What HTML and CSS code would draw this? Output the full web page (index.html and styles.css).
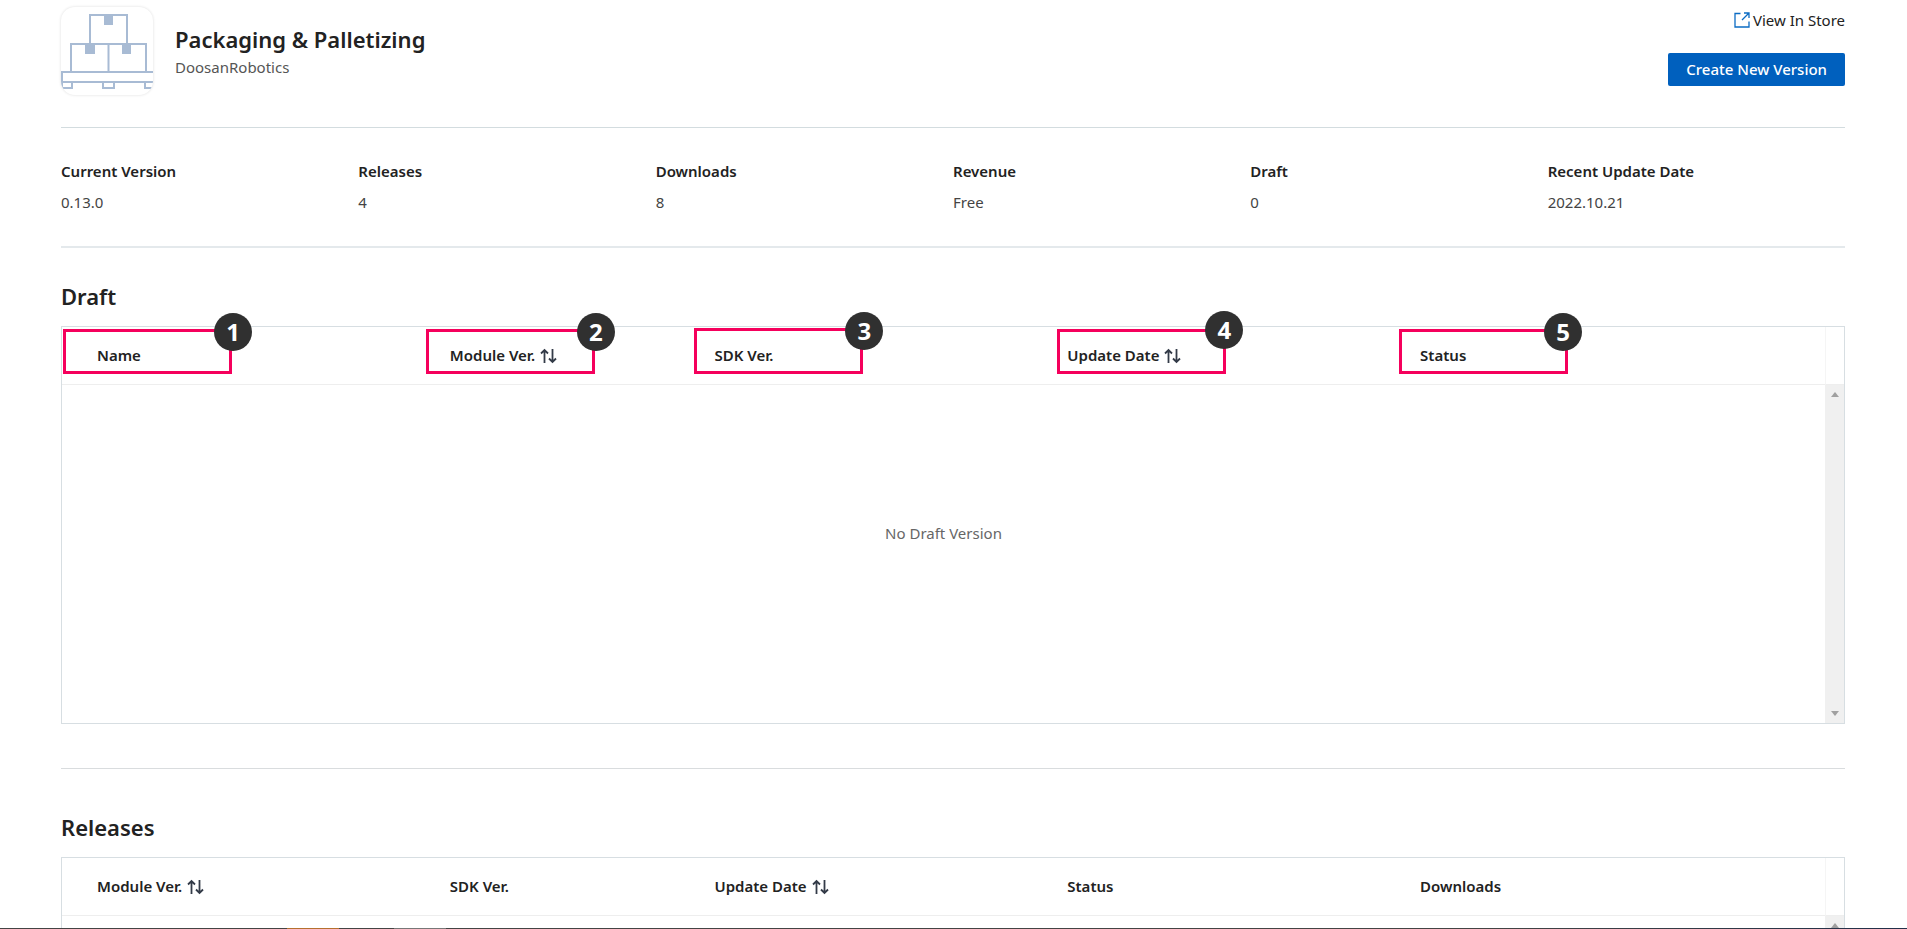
FILE: index.html
```html
<!DOCTYPE html>
<html lang="en">
<head>
<meta charset="utf-8">
<title>Packaging &amp; Palletizing</title>
<link rel="stylesheet" href="styles.css">
</head>
<body>
<svg class="defs" aria-hidden="true">
  <symbol id="sort" viewBox="0 0 17 16">
    <path d="M4.500 15V2.500M1 5.500l3.500-3.500L8 5.500M12.500 1v12.500M9 10.500l3.500 3.500 3.500-3.500" fill="none" stroke="currentColor" stroke-width="1.800"/>
  </symbol>
</svg>
<main class="page">
  <header class="app-header">
    <svg class="app-logo" viewBox="0 0 92 88" aria-hidden="true">
      <g fill="none" stroke="#a8bbd4" stroke-width="2">
        <path d="M29 36V8h37v28M10 65V37h75v28M47.500 37v28M0 65h92M1 65v10h91M1 75v6h10v-6M42 75v6h11v-6M84 75v6h8"/>
      </g>
      <path d="M43 8h9v10h-9zM24 37h10v10H24zM61 37h9v10h-9z" fill="#a8bbd4"/>
    </svg>
    <div class="app-title">
      <h1>Packaging &amp; Palletizing</h1>
      <p>DoosanRobotics</p>
    </div>
    <div class="app-actions">
      <a class="store-link" href="#">
        <svg viewBox="0 0 16 16" aria-hidden="true"><path d="M6.500 1.500h-5.500v13.500h14v-5.500M10 1h5v5M15 1L8 8" fill="none" stroke="#0b6cc4" stroke-width="1.300"/></svg>View In Store</a>
      <button class="create" type="button">Create New Version</button>
    </div>
  </header>

  <dl class="stats">
    <div><dt>Current Version</dt><dd>0.13.0</dd></div>
    <div><dt>Releases</dt><dd>4</dd></div>
    <div><dt>Downloads</dt><dd>8</dd></div>
    <div><dt>Revenue</dt><dd>Free</dd></div>
    <div><dt>Draft</dt><dd>0</dd></div>
    <div><dt>Recent Update Date</dt><dd>2022.10.21</dd></div>
  </dl>

  <section class="block draft">
    <h2>Draft</h2>
    <table class="grid">
      <colgroup><col class="wide"><col class="narrow"><col class="wide"><col class="wide"><col><col class="gutter"></colgroup>
      <thead>
        <tr>
          <th>Name<span class="mark m1"><b>1</b></span></th>
          <th>Module Ver. <svg class="sort"><use href="#sort"/></svg><span class="mark m2"><b>2</b></span></th>
          <th>SDK Ver.<span class="mark m3"><b>3</b></span></th>
          <th>Update Date <svg class="sort"><use href="#sort"/></svg><span class="mark m4"><b>4</b></span></th>
          <th>Status<span class="mark m5"><b>5</b></span></th>
          <td class="corner"></td>
        </tr>
      </thead>
      <tbody>
        <tr>
          <td class="empty" colspan="5">No Draft Version</td>
          <td class="track"><div class="arrows"><i class="up"></i><i class="down"></i></div></td>
        </tr>
      </tbody>
    </table>
  </section>

  <section class="block releases">
    <h2>Releases</h2>
    <table class="grid">
      <colgroup><col class="wide"><col class="narrow"><col class="wide"><col class="wide"><col><col class="gutter"></colgroup>
      <thead>
        <tr>
          <th>Module Ver. <svg class="sort"><use href="#sort"/></svg></th>
          <th>SDK Ver.</th>
          <th>Update Date <svg class="sort"><use href="#sort"/></svg></th>
          <th>Status</th>
          <th>Downloads</th>
          <td class="corner"></td>
        </tr>
      </thead>
      <tbody>
        <tr>
          <td class="empty" colspan="5"></td>
          <td class="track"><div class="arrows"><i class="up"></i><i class="down"></i></div></td>
        </tr>
      </tbody>
    </table>
  </section>
</main>
<div class="taskbar"></div>
</body>
</html>
```
FILE: styles.css
```css
* { box-sizing: border-box; }
body {
  margin: 0;
  height: 100vh;
  overflow: hidden;
  background: #fff;
  color: #222;
  font: 15px/20px "Noto Sans", sans-serif;
}
h1, h2, p, dl, dd { margin: 0; }
h1, h2 { font-size: 22px; line-height: 30px; font-weight: 600; }
.defs { position: absolute; width: 0; height: 0; }
.page { padding: 0 62px 0 61px; }

.app-header {
  display: flex;
  align-items: flex-start;
  padding: 7px 0 32px;
  border-bottom: 1px solid #d3dcdf;
}
.app-logo {
  width: 92px;
  height: 88px;
  border-radius: 14px;
  box-shadow: 0 0 3px rgba(0, 0, 0, .14);
}
.app-title { flex: 1; padding: 17px 0 0 22px; }
.app-title p { margin-top: 3px; color: #555; }
.app-actions { display: flex; flex-direction: column; align-items: flex-end; gap: 23px; padding-top: 3px; }
.store-link { display: flex; align-items: center; gap: 3px; color: #222; text-decoration: none; }
.store-link svg { width: 16px; height: 16px; }
.create {
  height: 33px;
  padding: 0 18px 1px;
  border: 0;
  border-radius: 2px;
  background: #0060be;
  color: #fff;
  font: 500 15px/20px "Noto Sans", sans-serif;
}

.stats {
  display: grid;
  grid-template-columns: repeat(6, 1fr);
  padding: 33px 0 34px;
  border-bottom: 2px solid #e4e9ec;
}
.stats dt { font-weight: 600; }
.stats dd { margin-top: 11px; color: #444; }

.block h2 { margin-bottom: 15px; }
.draft { padding: 33px 0 44px; border-bottom: 1px solid #d9dcde; }
.releases { padding-top: 43px; }

.grid {
  width: 100%;
  table-layout: fixed;
  border-collapse: separate;
  border-spacing: 0;
  border: 1px solid #d7dee2;
}
.wide { width: 19.8%; }
.narrow { width: 14.85%; }
.gutter { width: 19px; }
.grid th, .corner { height: 58px; border-bottom: 1px solid #eee; }
.grid th { position: relative; padding: 0 0 2px 35px; text-align: left; font-weight: 600; }
.corner { padding: 0; border-left: 1px solid #f5f5f5; }
.sort { width: 17px; height: 16px; margin-left: 1px; vertical-align: -3px; color: #333b48; }
.empty { height: 338px; padding: 0 0 42px; text-align: center; color: #666; }
.track { padding: 0; background: #f0f0f0; }
.arrows { display: flex; flex-direction: column; justify-content: space-between; align-items: center; height: 338px; padding: 7px 0; }
.up, .down { width: 0; border: 4px solid transparent; border-top-width: 0; border-bottom: 5px solid #a0a0a0; }
.down { border-top: 5px solid #a0a0a0; border-bottom: 0; }

/* Numbered callouts laid over the column headings */
.mark {
  position: absolute;
  top: 2px;
  width: 169px;
  height: 45px;
  border: 3px solid #f5005c;
}
.mark b {
  position: absolute;
  top: -19px;
  right: -23px;
  width: 38px;
  height: 38px;
  border-radius: 50%;
  background: #303030;
  color: #fff;
  font-size: 24px;
  font-weight: 700;
  line-height: 37px;
  text-align: center;
}
.m1 { left: 1px; }
.m2 { left: 11px; }
.m3 { left: 15px; top: 1px; height: 46px; }
.m4 { left: 25px; }
.m5 { left: 14px; }
.m4 b { top: -21px; right: -20px; }
.m5 b { right: -17px; }

.taskbar {
  position: fixed;
  inset: auto 0 0;
  height: 1px;
  background: linear-gradient(90deg, #444 0 287px, #b5702f 287px 339px, #444 339px 394px, #777 394px 446px, #444 446px 78%, #22304a);
}
```
